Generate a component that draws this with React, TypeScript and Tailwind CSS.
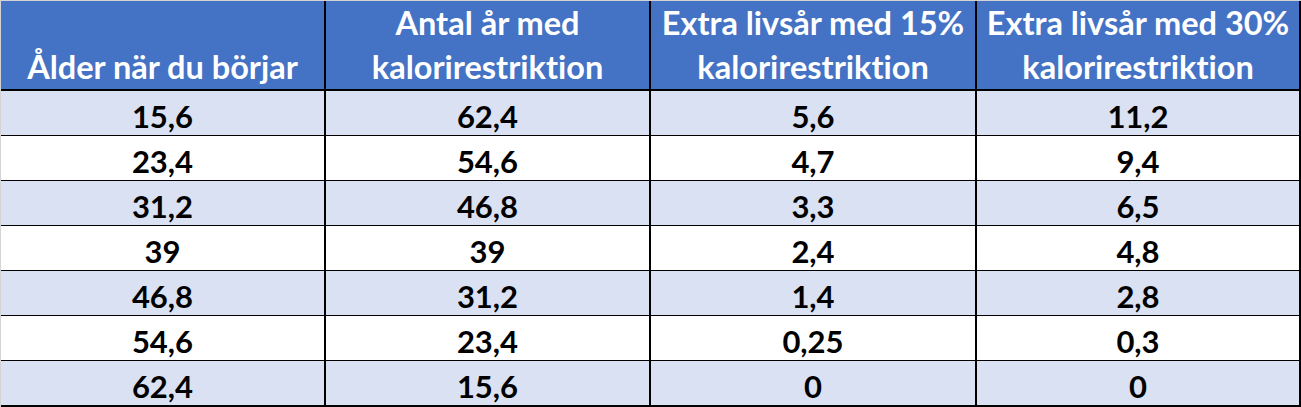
const headers: string[][] = [
  ['Ålder när du börjar'],
  ['Antal år med', 'kalorirestriktion'],
  ['Extra livsår med 15%', 'kalorirestriktion'],
  ['Extra livsår med 30%', 'kalorirestriktion'],
];

const rows: string[][] = [
  ['15,6', '62,4', '5,6', '11,2'],
  ['23,4', '54,6', '4,7', '9,4'],
  ['31,2', '46,8', '3,3', '6,5'],
  ['39', '39', '2,4', '4,8'],
  ['46,8', '31,2', '1,4', '2,8'],
  ['54,6', '23,4', '0,25', '0,3'],
  ['62,4', '15,6', '0', '0'],
];

export default function App() {
  return (
    <div className="w-[1301px] h-[407px] bg-white border-t border-l border-[#d4d4d4] font-['Lato',sans-serif] font-bold [font-variant-ligatures:none]">
      {/* Header */}
      <div className="grid grid-cols-[325px_325px_326px_324px] h-[90px] bg-[#4472c4] border-b-2 border-black text-white text-[32.5px]">
        {headers.map((lines, i) => (
          <div key={i} className="border-r-2 border-black flex flex-col items-center justify-end pb-[3px] leading-[44px]">
            {lines.map((l) => (
              <span key={l} className="whitespace-nowrap">{l}</span>
            ))}
          </div>
        ))}
      </div>

      {/* Body */}
      {rows.map((row, r) => (
        <div
          key={r}
          className={`grid grid-cols-[325px_325px_326px_324px] ${r === rows.length - 1 ? 'h-[46px] border-b-2' : 'h-[45px] border-b'} border-black ${r % 2 === 0 ? 'bg-[#d9e1f2]' : 'bg-white'} text-black text-[31px]`}
        >
          {row.map((v, c) => (
            <div key={c} className="border-r-2 border-black flex items-center justify-center pt-[2px]">
              {v}
            </div>
          ))}
        </div>
      ))}
    </div>
  );
}
